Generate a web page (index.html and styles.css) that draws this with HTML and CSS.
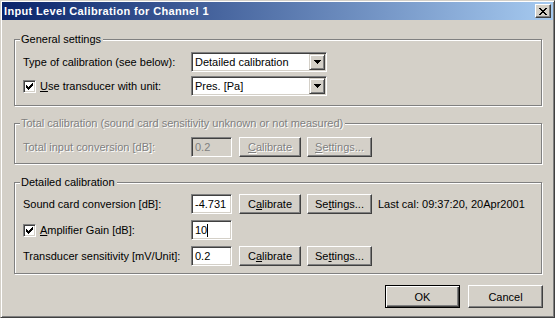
FILE: index.html
```html
<!DOCTYPE html>
<html lang="en">
<head>
  <meta charset="UTF-8">
  <title>Input Level Calibration for Channel 1</title>
  <link rel="stylesheet" href="styles.css">
</head>
<body>
  <div class="window">
    <div class="titlebar">
      <span class="title">Input Level Calibration for Channel 1</span>
      <button class="close" type="button">
        <svg width="8" height="7" viewBox="0 0 8 7" shape-rendering="crispEdges"><path d="M0 0h2v1H0z M6 0h2v1H6z M1 1h2v1H1z M5 1h2v1H5z M2 2h4v1H2z M3 3h2v1H3z M2 4h4v1H2z M1 5h2v1H1z M5 5h2v1H5z M0 6h2v1H0z M6 6h2v1H6z" fill="#000"/></svg>
      </button>
    </div>

    <div class="content">
      <!-- general -->
      <section class="group group-general">
        <div class="legend">General settings</div>
        <div class="rows">
          <div class="row">
            <span class="lbl">Type of calibration (see below):</span>
            <div class="combo">
              <span class="combo-text">Detailed calibration</span>
              <span class="combo-btn"><svg width="7" height="4" viewBox="0 0 7 4" shape-rendering="crispEdges"><path d="M0 0h7v1H0z M1 1h5v1H1z M2 2h3v1H2z M3 3h1v1H3z" fill="#000"/></svg></span>
            </div>
          </div>
          <div class="row">
            <span class="lbl">
              <span class="check"><svg width="7" height="7" viewBox="0 0 7 7" shape-rendering="crispEdges"><path d="M0 2h1v3H0z M1 3h1v3H1z M2 4h1v3H2z M3 3h1v3H3z M4 2h1v3H4z M5 1h1v3H5z M6 0h1v3H6z" fill="#000"/></svg></span>
              <span><u>U</u>se transducer with unit:</span>
            </span>
            <div class="combo">
              <span class="combo-text">Pres. [Pa]</span>
              <span class="combo-btn"><svg width="7" height="4" viewBox="0 0 7 4" shape-rendering="crispEdges"><path d="M0 0h7v1H0z M1 1h5v1H1z M2 2h3v1H2z M3 3h1v1H3z" fill="#000"/></svg></span>
            </div>
          </div>
        </div>
      </section>

      <!-- total (disabled) -->
      <section class="group group-total">
        <div class="legend disabled">Total calibration (sound card sensitivity unknown or not measured)</div>
        <div class="rows">
          <div class="row">
            <span class="lbl disabled">Total input conversion [dB]:</span>
            <div class="edit edit-off">0.2</div>
            <button class="btn btn-cal disabled" type="button"><u>C</u>alibrate</button>
            <button class="btn btn-set disabled" type="button"><u>S</u>ettings...</button>
          </div>
        </div>
      </section>

      <!-- detailed -->
      <section class="group group-detail">
        <div class="legend">Detailed calibration</div>
        <div class="rows">
          <div class="row">
            <span class="lbl">Sound card conversion [dB]:</span>
            <div class="edit">-4.731</div>
            <button class="btn btn-cal" type="button">C<u>a</u>librate</button>
            <button class="btn btn-set" type="button">Se<u>t</u>tings...</button>
            <span class="last-cal">Last cal: 09:37:20, 20Apr2001</span>
          </div>
          <div class="row">
            <span class="lbl">
              <span class="check"><svg width="7" height="7" viewBox="0 0 7 7" shape-rendering="crispEdges"><path d="M0 2h1v3H0z M1 3h1v3H1z M2 4h1v3H2z M3 3h1v3H3z M4 2h1v3H4z M5 1h1v3H5z M6 0h1v3H6z" fill="#000"/></svg></span>
              <span><u>A</u>mplifier Gain [dB]:</span>
            </span>
            <div class="edit">10<span class="caret"></span></div>
          </div>
          <div class="row">
            <span class="lbl">Transducer sensitivity [mV/Unit]:</span>
            <div class="edit">0.2</div>
            <button class="btn btn-cal" type="button">C<u>a</u>librate</button>
            <button class="btn btn-set" type="button">Se<u>t</u>tings...</button>
          </div>
        </div>
      </section>

      <div class="actions">
        <button class="btn btn-dlg btn-default" type="button">OK</button>
        <button class="btn btn-dlg" type="button">Cancel</button>
      </div>
    </div>
  </div>
</body>
</html>
```

FILE: styles.css
```css
body {
  margin: 0;
  background: #d4d0c8;
  font-family: "Liberation Sans", Arial, sans-serif;
  font-size: 11px;
  color: #000;
}
.window {
  width: 555px;
  height: 318px;
  box-sizing: border-box;
  border: 1px solid;
  border-color: #d4d0c8 #404040 #404040 #d4d0c8;
  box-shadow: inset 1px 1px #fff, inset -1px -1px #808080;
  padding: 1px;
  background: #d4d0c8;
}
.titlebar {
  height: 18px;
  display: flex;
  align-items: center;
  justify-content: space-between;
  padding: 0 2px 0 2px;
  background: linear-gradient(to right, #0a246a, #a6caf0);
}
.title {
  color: #fff;
  font-weight: bold;
  line-height: 18px;
  letter-spacing: 0.35px;
  white-space: nowrap;
}
.close {
  width: 16px;
  height: 14px;
  box-sizing: border-box;
  padding: 0;
  display: flex;
  align-items: center;
  justify-content: center;
  background: #d4d0c8;
  border: 1px solid;
  border-color: #fff #404040 #404040 #fff;
  box-shadow: inset -1px -1px #808080;
}
.close svg {
  display: block;
}
.content {
  padding: 19px 11px 0 12px;
}
.group {
  border: 1px solid #808080;
  box-shadow: inset 1px 1px #fff, 1px 1px #fff;
  padding: 0 8px;
}
.group-general {
  padding-bottom: 9px;
}
.group-total {
  margin-top: 17px;
  padding-bottom: 6px;
}
.group-detail {
  margin-top: 18px;
  padding-bottom: 7px;
}
.legend {
  width: fit-content;
  height: 13px;
  line-height: 13px;
  margin: -7px 0 0 -3px;
  padding: 0 2px 0 1px;
  background: #d4d0c8;
  white-space: nowrap;
}
.rows {
  display: flex;
  flex-direction: column;
  gap: 4px;
  margin-top: 6px;
}
.group-total .rows {
  margin-top: 7px;
}
.group-detail .rows {
  gap: 6px;
  margin-top: 5px;
}
.row {
  display: flex;
  align-items: center;
  height: 20px;
}
.row > * {
  flex-shrink: 0;
}
.lbl {
  width: 168px;
  display: flex;
  align-items: center;
  white-space: nowrap;
}
.disabled {
  color: #808080;
  text-shadow: 1px 1px 0 #fff;
}
.check {
  width: 13px;
  height: 13px;
  box-sizing: border-box;
  margin-right: 4px;
  background: #fff;
  border: 1px solid;
  border-color: #808080 #fff #fff #808080;
  box-shadow: inset 1px 1px #404040, inset -1px -1px #d4d0c8;
}
.check svg {
  display: block;
  margin: 2px 0 0 2px;
}
.combo {
  width: 136px;
  height: 20px;
  box-sizing: border-box;
  display: flex;
  align-items: center;
  padding: 1px;
  background: #fff;
  border: 1px solid;
  border-color: #808080 #fff #fff #808080;
  box-shadow: inset 1px 1px #404040, inset -1px -1px #d4d0c8;
}
.combo-text {
  flex: 1;
  padding-left: 2px;
  white-space: nowrap;
}
.combo-btn {
  width: 16px;
  height: 16px;
  box-sizing: border-box;
  display: flex;
  align-items: center;
  justify-content: center;
  background: #d4d0c8;
  border: 1px solid;
  border-color: #d4d0c8 #404040 #404040 #d4d0c8;
  box-shadow: inset 1px 1px #fff, inset -1px -1px #808080;
}
.combo-btn svg {
  display: block;
}
.edit {
  width: 41px;
  height: 20px;
  box-sizing: border-box;
  display: flex;
  align-items: center;
  padding: 0 3px;
  background: #fff;
  border: 1px solid;
  border-color: #808080 #fff #fff #808080;
  box-shadow: inset 1px 1px #404040, inset -1px -1px #d4d0c8;
}
.edit-off {
  background: #d4d0c8;
  color: #808080;
}
.caret {
  width: 1px;
  height: 13px;
  background: #000;
}
.btn {
  height: 20px;
  box-sizing: border-box;
  padding: 0;
  font: inherit;
  color: #000;
  background: #d4d0c8;
  border: 1px solid;
  border-color: #fff #404040 #404040 #fff;
  box-shadow: inset -1px -1px #808080;
}
.btn.disabled {
  color: #808080;
}
.btn-cal {
  width: 62px;
  margin-left: 7px;
}
.btn-set {
  width: 65px;
  margin-left: 6px;
}
.last-cal {
  margin-left: 6px;
  white-space: nowrap;
}
.actions {
  display: flex;
  justify-content: flex-end;
  gap: 8px;
  margin: 11px -1px 0 0;
}
.btn-dlg {
  width: 75px;
  height: 23px;
}
.btn-default {
  border: 1px solid #000;
  box-shadow: inset 1px 1px #fff, inset -1px -1px #404040, inset -2px -2px #808080;
}
```
